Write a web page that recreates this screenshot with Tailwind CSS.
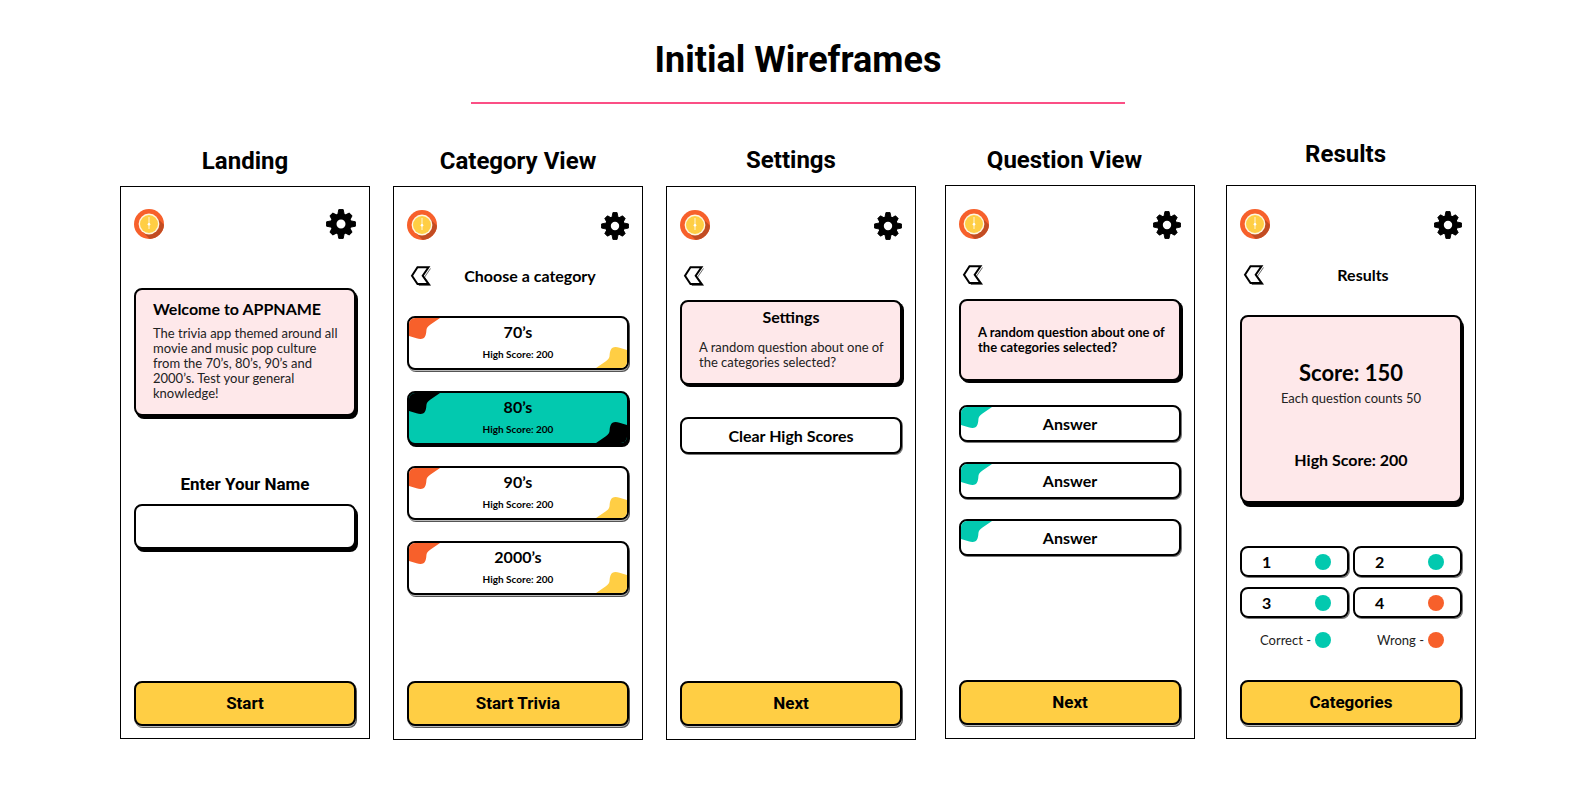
<!DOCTYPE html>
<html lang="en">
<head>
<meta charset="utf-8">
<meta name="viewport" content="width=device-width, initial-scale=1">
<title>Initial Wireframes</title>
<script src="https://cdn.jsdelivr.net/npm/@tailwindcss/browser@4"></script>
</head>
<body class="bg-white font-[Lato,sans-serif] text-black">

<svg class="hidden" aria-hidden="true">
  <symbol id="coin" viewBox="-15 -15 30 30">
    <circle r="15" fill="#f7602b"/>
    <path d="M7.100-7.100 14.980 0.780A15 15 0 0 1 0.780 14.980L-7.100 7.100z" fill="#c24c22"/>
    <circle r="10.4" fill="#fff6e0"/>
    <circle r="9" fill="#ffce44"/>
    <path d="M0-7V5" stroke="#fff" stroke-width="0.8"/>
    <circle r="1.3" cy="0.2" fill="#fff"/>
  </symbol>
  <symbol id="gear" viewBox="-15 -15 30 30">
    <circle r="7.5" fill="none" stroke="#000" stroke-width="6"/>
    <g fill="#000" stroke="#000" stroke-width="1" stroke-linejoin="round">
      <path d="M-2.2-14.4h4.4L3.3-9h-6.6zM-2.2 14.4h4.4L3.3 9h-6.6zM-14.4-2.2v4.4L-9 3.3v-6.6zM14.4-2.2v4.4L9 3.3v-6.6z"/>
      <path transform="rotate(45)" d="M-2-13.4h4L3.3-9h-6.6zM-2 13.4h4L3.3 9h-6.6zM-13.4-2v4L-9 3.3v-6.6zM13.4-2v4L9 3.3v-6.6z"/>
    </g>
  </symbol>
  <symbol id="back" viewBox="0 0 24 20">
    <path d="M6.500 11.200 12 19.500H23.500L17.500 11.200 23.500 2.500" fill="none" stroke="#444" stroke-width="0.8"/>
    <path d="M5 9.700 10.500 1.200H21.500L15.700 9.700 21.500 18H10.500z" fill="#fff" stroke="#000" stroke-width="2"/>
  </symbol>
  <symbol id="blob" viewBox="0 0 31 21">
    <path d="M0 0H31L21.500 6.500C15.500 10.500 18.500 12.500 16.500 17.500 15 21.500 11.500 21.500 7.500 20.300L0 18z" fill="currentColor"/>
  </symbol>
</svg>

<header class="pt-[39px]">
  <h1 class="text-center font-[Roboto,sans-serif] text-4xl/[42px] font-bold">Initial Wireframes</h1>
  <hr class="mx-auto mt-[21px] h-[2px] w-[41%] border-0 bg-[#fb4f85]">
</header>

<main class="mt-9 flex items-start gap-[23px] px-[120px]">

  <section class="mt-[7px] min-w-0 flex-1">
    <h2 class="text-center font-[Roboto,sans-serif] text-2xl/7 font-bold">Landing</h2>
    <div class="mt-[11px] border border-black px-[13px] pt-[22px] pb-3">
      <div class="flex items-end justify-between">
        <svg class="size-[30px]" role="img" aria-label="Coin"><use href="#coin"/></svg>
        <button class="block" aria-label="Settings"><svg class="size-[30px]"><use href="#gear"/></svg></button>
      </div>
      <div class="mt-[49px] rounded-lg border-2 border-black bg-[#fee8ea] pt-[9px] pr-3 pb-[13px] pl-[17px] shadow-[2px_3px_0_0_#000]">
        <h3 class="text-base/5 font-bold">Welcome to APPNAME</h3>
        <p class="mt-[7px] text-[13px]/[15px] text-[#222]">The trivia app themed around all movie and music pop culture from the 70’s, 80’s, 90’s and 2000’s. Test your general knowledge!</p>
      </div>
      <label for="name" class="mt-[58px] block text-center font-[Roboto,sans-serif] text-[17px]/5 font-bold">Enter Your Name</label>
      <input id="name" type="text" class="mt-[10px] block h-[45px] w-full rounded-lg border-2 border-black bg-white px-4 text-base shadow-[2px_3px_0_0_#000]">
      <button class="mt-[132px] block h-[45px] w-full rounded-lg border-2 border-black bg-[#ffce44] font-[Roboto,sans-serif] text-[17px] font-bold shadow-[0_1px_0_0_#bbb,1px_2px_0_0_#555]">Start</button>
    </div>
  </section>

  <section class="mt-[7px] min-w-0 flex-1">
    <h2 class="text-center font-[Roboto,sans-serif] text-2xl/7 font-bold">Category View</h2>
    <div class="mt-[11px] border border-black px-[13px] pt-[23px] pb-[13px]">
      <div class="flex items-end justify-between">
        <svg class="size-[30px]" role="img" aria-label="Coin"><use href="#coin"/></svg>
        <button class="block" aria-label="Settings"><svg class="size-7"><use href="#gear"/></svg></button>
      </div>
      <div class="mt-[26px] flex">
        <button aria-label="Back"><svg class="h-5 w-6"><use href="#back"/></svg></button>
        <h3 class="flex-1 text-center text-base/5 font-bold">Choose a category</h3>
      </div>
      <div class="mt-[30px] flex flex-col gap-[21px]">
        <button class="relative rounded-lg border-2 border-black bg-white pt-1 pb-2 shadow-[0_1px_0_0_#bbb,1px_2px_0_0_#555]">
          <span class="absolute inset-0 overflow-hidden rounded-md">
            <svg class="absolute top-0 left-0 h-[21px] w-[31px] text-[#f7602b]"><use href="#blob"/></svg>
            <svg class="absolute right-0 bottom-0 h-[21px] w-[31px] rotate-180 text-[#ffce44]"><use href="#blob"/></svg>
          </span>
          <span class="block text-base/5 font-bold">70’s</span>
          <span class="mt-[6px] block text-[10px]/3 font-bold">High Score: 200</span>
        </button>
        <button aria-pressed="true" class="relative rounded-lg border-2 border-black bg-[#02c9af] pt-1 pb-2 shadow-[1px_2px_0_0_#000]">
          <span class="absolute inset-0 overflow-hidden rounded-md">
            <svg class="absolute top-0 left-0 h-[21px] w-[31px] text-black"><use href="#blob"/></svg>
            <svg class="absolute right-0 bottom-0 h-[21px] w-[31px] rotate-180 text-black"><use href="#blob"/></svg>
          </span>
          <span class="block text-base/5 font-bold">80’s</span>
          <span class="mt-[6px] block text-[10px]/3 font-bold">High Score: 200</span>
        </button>
        <button class="relative rounded-lg border-2 border-black bg-white pt-1 pb-2 shadow-[0_1px_0_0_#bbb,1px_2px_0_0_#555]">
          <span class="absolute inset-0 overflow-hidden rounded-md">
            <svg class="absolute top-0 left-0 h-[21px] w-[31px] text-[#f7602b]"><use href="#blob"/></svg>
            <svg class="absolute right-0 bottom-0 h-[21px] w-[31px] rotate-180 text-[#ffce44]"><use href="#blob"/></svg>
          </span>
          <span class="block text-base/5 font-bold">90’s</span>
          <span class="mt-[6px] block text-[10px]/3 font-bold">High Score: 200</span>
        </button>
        <button class="relative rounded-lg border-2 border-black bg-white pt-1 pb-2 shadow-[0_1px_0_0_#bbb,1px_2px_0_0_#555]">
          <span class="absolute inset-0 overflow-hidden rounded-md">
            <svg class="absolute top-0 left-0 h-[21px] w-[31px] text-[#f7602b]"><use href="#blob"/></svg>
            <svg class="absolute right-0 bottom-0 h-[21px] w-[31px] rotate-180 text-[#ffce44]"><use href="#blob"/></svg>
          </span>
          <span class="block text-base/5 font-bold">2000’s</span>
          <span class="mt-[6px] block text-[10px]/3 font-bold">High Score: 200</span>
        </button>
      </div>
      <button class="mt-[86px] block h-[45px] w-full rounded-lg border-2 border-black bg-[#ffce44] font-[Roboto,sans-serif] text-[17px] font-bold shadow-[0_1px_0_0_#bbb,1px_2px_0_0_#555]">Start Trivia</button>
    </div>
  </section>

  <section class="mt-[6px] min-w-0 flex-1">
    <h2 class="text-center font-[Roboto,sans-serif] text-2xl/7 font-bold">Settings</h2>
    <div class="mt-3 border border-black px-[13px] pt-[23px] pb-[13px]">
      <div class="flex items-end justify-between">
        <svg class="size-[30px]" role="img" aria-label="Coin"><use href="#coin"/></svg>
        <button class="block" aria-label="Settings"><svg class="size-7"><use href="#gear"/></svg></button>
      </div>
      <div class="mt-[26px] flex">
        <button aria-label="Back"><svg class="h-5 w-6"><use href="#back"/></svg></button>
      </div>
      <div class="mt-[14px] rounded-lg border-2 border-black bg-[#fee8ea] pt-[5px] pb-[13px] shadow-[2px_2px_0_0_#000]">
        <h3 class="text-center text-base/5 font-bold">Settings</h3>
        <p class="mt-[13px] pr-3 pl-[17px] text-[13px]/[15px] text-[#222]">A random question about one of the categories selected?</p>
      </div>
      <button class="mt-8 block h-[37px] w-full rounded-lg border-2 border-black bg-white text-base font-bold shadow-[1px_1px_0_0_#777]">Clear High Scores</button>
      <button class="mt-[227px] block h-[45px] w-full rounded-lg border-2 border-black bg-[#ffce44] font-[Roboto,sans-serif] text-[17px] font-bold shadow-[0_1px_0_0_#bbb,1px_2px_0_0_#555]">Next</button>
    </div>
  </section>

  <section class="mt-[6px] ml-[6px] min-w-0 flex-1">
    <h2 class="pr-[11px] text-center font-[Roboto,sans-serif] text-2xl/7 font-bold">Question View</h2>
    <div class="mt-[11px] border border-black px-[13px] pt-[23px] pb-[13px]">
      <div class="flex items-end justify-between">
        <svg class="size-[30px]" role="img" aria-label="Coin"><use href="#coin"/></svg>
        <button class="block" aria-label="Settings"><svg class="size-7"><use href="#gear"/></svg></button>
      </div>
      <div class="mt-[26px] flex">
        <button aria-label="Back"><svg class="h-5 w-6"><use href="#back"/></svg></button>
      </div>
      <div class="mt-[14px] rounded-lg border-2 border-black bg-[#fee8ea] pt-6 pr-3 pb-6 pl-[17px] shadow-[2px_2px_0_0_#000]">
        <p class="text-[13px]/[15px] font-bold">A random question about one of the categories selected?</p>
      </div>
      <div class="mt-6 flex flex-col gap-5">
        <button class="relative h-[37px] rounded-lg border-2 border-black bg-white text-base font-bold shadow-[1px_1px_0_0_#777]">
          <span class="absolute inset-0 overflow-hidden rounded-md"><svg class="h-[21px] w-[31px] text-[#02c9af]"><use href="#blob"/></svg></span>Answer</button>
        <button class="relative h-[37px] rounded-lg border-2 border-black bg-white text-base font-bold shadow-[1px_1px_0_0_#777]">
          <span class="absolute inset-0 overflow-hidden rounded-md"><svg class="h-[21px] w-[31px] text-[#02c9af]"><use href="#blob"/></svg></span>Answer</button>
        <button class="relative h-[37px] rounded-lg border-2 border-black bg-white text-base font-bold shadow-[1px_1px_0_0_#777]">
          <span class="absolute inset-0 overflow-hidden rounded-md"><svg class="h-[21px] w-[31px] text-[#02c9af]"><use href="#blob"/></svg></span>Answer</button>
      </div>
      <button class="mt-[124px] block h-[45px] w-full rounded-lg border-2 border-black bg-[#ffce44] font-[Roboto,sans-serif] text-[17px] font-bold shadow-[0_1px_0_0_#bbb,1px_2px_0_0_#555]">Next</button>
    </div>
  </section>

  <section class="ml-2 min-w-0 flex-1">
    <h2 class="pr-[11px] text-center font-[Roboto,sans-serif] text-2xl/7 font-bold">Results</h2>
    <div class="mt-[17px] border border-black px-[13px] pt-[23px] pb-[13px]">
      <div class="flex items-end justify-between">
        <svg class="size-[30px]" role="img" aria-label="Coin"><use href="#coin"/></svg>
        <button class="block" aria-label="Settings"><svg class="size-7"><use href="#gear"/></svg></button>
      </div>
      <div class="mt-[26px] flex">
        <button aria-label="Back"><svg class="h-5 w-6"><use href="#back"/></svg></button>
        <h3 class="flex-1 text-center text-base/5 font-bold">Results</h3>
      </div>
      <div class="mt-[30px] rounded-lg border-2 border-black bg-[#fee8ea] pt-[42px] pb-[31px] text-center shadow-[2px_4px_0_0_#000]">
        <p class="text-[22px]/7 font-bold">Score: 150</p>
        <p class="mt-1 text-[13px]/[15px] text-[#222]">Each question counts 50</p>
        <p class="mt-11 text-base/5 font-bold">High Score: 200</p>
      </div>
      <ol class="mt-[43px] grid grid-cols-2 gap-x-1 gap-y-[10px]">
        <li class="flex h-[31px] items-center justify-between rounded-lg border-2 border-black pr-4 pl-5 text-base font-bold shadow-[1px_1px_0_0_#777]">1<span class="size-4 rounded-full bg-[#02c9af]"></span></li>
        <li class="flex h-[31px] items-center justify-between rounded-lg border-2 border-black pr-4 pl-5 text-base font-bold shadow-[1px_1px_0_0_#777]">2<span class="size-4 rounded-full bg-[#02c9af]"></span></li>
        <li class="flex h-[31px] items-center justify-between rounded-lg border-2 border-black pr-4 pl-5 text-base font-bold shadow-[1px_1px_0_0_#777]">3<span class="size-4 rounded-full bg-[#02c9af]"></span></li>
        <li class="flex h-[31px] items-center justify-between rounded-lg border-2 border-black pr-4 pl-5 text-base font-bold shadow-[1px_1px_0_0_#777]">4<span class="size-4 rounded-full bg-[#f7602b]"></span></li>
      </ol>
      <div class="mt-[14px] grid grid-cols-2 gap-x-1 text-[13px]/4 text-[#222]">
        <p class="flex items-center justify-end gap-1 pr-[18px]">Correct - <span class="size-4 rounded-full bg-[#02c9af]"></span></p>
        <p class="flex items-center justify-end gap-1 pr-[18px]">Wrong - <span class="size-4 rounded-full bg-[#f7602b]"></span></p>
      </div>
      <button class="mt-8 block h-[45px] w-full rounded-lg border-2 border-black bg-[#ffce44] font-[Roboto,sans-serif] text-[17px] font-bold shadow-[0_1px_0_0_#bbb,1px_2px_0_0_#555]">Categories</button>
    </div>
  </section>

</main>
</body>
</html>
